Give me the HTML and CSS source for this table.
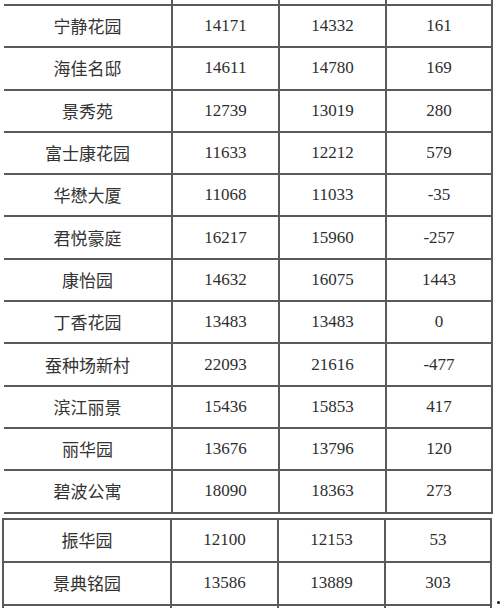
FILE: index.html
```html
<!DOCTYPE html>
<html lang="zh-CN">
<head>
<meta charset="utf-8">
<title>楼盘价格表</title>
<link rel="stylesheet" href="styles.css">
</head>
<body>
<div class="page">
  <table class="grid t1">
    <tbody>
      <tr class="stub"><td></td><td></td><td></td><td></td></tr>
      <tr class="row"><td class="name">宁静花园</td><td>14171</td><td>14332</td><td>161</td></tr>
      <tr class="row"><td class="name">海佳名邸</td><td>14611</td><td>14780</td><td>169</td></tr>
      <tr class="row"><td class="name">景秀苑</td><td>12739</td><td>13019</td><td>280</td></tr>
      <tr class="row"><td class="name">富士康花园</td><td>11633</td><td>12212</td><td>579</td></tr>
      <tr class="row"><td class="name">华懋大厦</td><td>11068</td><td>11033</td><td>-35</td></tr>
      <tr class="row"><td class="name">君悦豪庭</td><td>16217</td><td>15960</td><td>-257</td></tr>
      <tr class="row"><td class="name">康怡园</td><td>14632</td><td>16075</td><td>1443</td></tr>
      <tr class="row"><td class="name">丁香花园</td><td>13483</td><td>13483</td><td>0</td></tr>
      <tr class="row"><td class="name">蚕种场新村</td><td>22093</td><td>21616</td><td>-477</td></tr>
      <tr class="row"><td class="name">滨江丽景</td><td>15436</td><td>15853</td><td>417</td></tr>
      <tr class="row"><td class="name">丽华园</td><td>13676</td><td>13796</td><td>120</td></tr>
      <tr class="row"><td class="name">碧波公寓</td><td>18090</td><td>18363</td><td>273</td></tr>
    </tbody>
  </table>
  <div class="second">
    <table class="grid t2">
      <tbody>
        <tr class="row2"><td class="name">振华园</td><td>12100</td><td>12153</td><td>53</td></tr>
        <tr class="row2"><td class="name">景典铭园</td><td>13586</td><td>13889</td><td>303</td></tr>
        <tr class="stub2"><td></td><td></td><td></td><td></td></tr>
      </tbody>
    </table>
    <span class="dot"></span>
  </div>
</div>
</body>
</html>
```

FILE: styles.css
```css
html, body {
  margin: 0;
  padding: 0;
  background: #ffffff;
}

.page {
  width: 500px;
  height: 608px;
  overflow: hidden;
  display: flex;
  flex-direction: column;
}

.grid {
  border-collapse: separate;
  border-spacing: 0;
  table-layout: fixed;
  color: #2e2e2e;
}

.grid td {
  padding: 0;
  text-align: center;
  vertical-align: middle;
  font-family: "Liberation Serif", "Noto Sans CJK SC", serif;
  font-size: 17px;
  line-height: 20px;
  border-right: 2px solid #5a5a5a;
  border-bottom: 2px solid #5a5a5a;
}

.grid td.name {
  font-family: "Noto Sans CJK SC", sans-serif;
  font-size: 17px;
  color: #333333;
}

.t1 {
  margin-left: 4px;
  width: 489px;
}

.t1 td:nth-child(1) { width: 167px; }
.t1 td:nth-child(2) { width: 105px; }
.t1 td:nth-child(3) { width: 105px; }
.t1 td:nth-child(4) { width: 104px; }

.t1 .stub { height: 6px; }
.t1 .row { height: 42.3px; }

.second {
  margin-top: 4px;
  display: flex;
  align-items: flex-end;
}

.t2 {
  margin-left: 2px;
  width: 490px;
}

.t2 tr:first-child td { border-top: 2px solid #5a5a5a; }
.t2 td:nth-child(1) {
  width: 166px;
  border-left: 2px solid #5a5a5a;
}
.t2 td:nth-child(2) { width: 105px; }
.t2 td:nth-child(3) { width: 105px; }
.t2 td:nth-child(4) { width: 104px; }

.t2 .row2 { height: 43px; }
.t2 .row2:first-child { height: 45px; }
.t2 .stub2 { height: 4px; }
.t2 .stub2 td { border-bottom: 0; }

.dot {
  width: 3px;
  height: 3px;
  border-radius: 50%;
  background: #111111;
  margin: 0 0 6px 5px;
}
```
